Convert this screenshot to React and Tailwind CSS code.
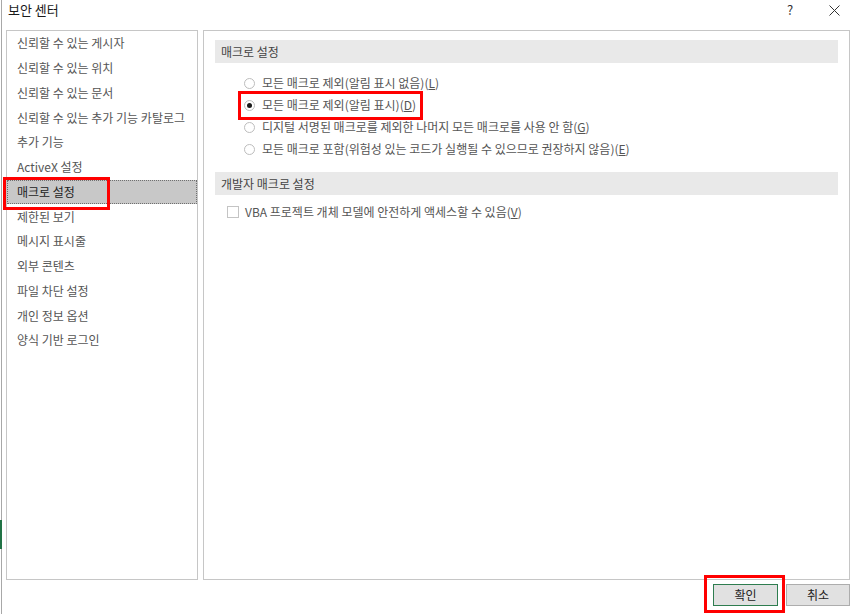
import React from "react";

const items = [
  "신뢰할 수 있는 게시자",
  "신뢰할 수 있는 위치",
  "신뢰할 수 있는 문서",
  "신뢰할 수 있는 추가 기능 카탈로그",
  "추가 기능",
  "ActiveX 설정",
  "매크로 설정",
  "제한된 보기",
  "메시지 표시줄",
  "외부 콘텐츠",
  "파일 차단 설정",
  "개인 정보 옵션",
  "양식 기반 로그인",
];

function Radio({ checked }) {
  return (
    <span className="flex h-[11px] w-[11px] shrink-0 items-center justify-center rounded-full border border-[#bdbdbd] bg-white">
      {checked && <span className="h-[5px] w-[5px] rounded-full bg-[#1a1a1a]" />}
    </span>
  );
}

function Option({ checked, label, k }) {
  return (
    <div className="flex h-[22px] items-center pl-[40px]">
      <Radio checked={checked} />
      <span className="ml-[7px] whitespace-nowrap">
        {label}(<span className="underline">{k}</span>)
      </span>
    </div>
  );
}

export default function App() {
  return (
    <div className="relative flex h-[614px] w-[856px] overflow-hidden bg-white font-['Noto_Sans_CJK_KR',sans-serif] text-[12px] text-[#444]">
      {/* window edge behind dialog */}
      <div className="flex w-[2px] shrink-0 flex-col">
        <div className="ml-px h-[520px] w-px bg-[#a8a8a8]" />
        <div className="h-[29px] w-[2px] bg-[#217346]" />
        <div className="ml-px w-px flex-1 bg-[#a8a8a8]" />
      </div>

      <div className="flex flex-1 flex-col">
        {/* title bar */}
        <div className="flex h-[28px] items-start">
          <div className="pl-[6px] pt-[1px] text-[13px] leading-[18px] text-[#1a1a1a]">보안 센터</div>
          <div className="ml-auto flex">
            <div className="flex h-[20px] w-[44px] items-center justify-center text-[13px] text-[#333]">?</div>
            <div className="flex h-[20px] w-[44px] items-center justify-center text-[#333]">
              <svg width="11" height="11" viewBox="0 0 11 11">
                <path d="M0.5 0.5 L10.5 10.5 M10.5 0.5 L0.5 10.5" stroke="#333" strokeWidth="1" />
              </svg>
            </div>
          </div>
        </div>

        {/* body */}
        <div className="mt-[2px] flex h-[550px] gap-[5px] pl-[4px]">
          {/* left nav */}
          <div className="flex w-[192px] shrink-0 flex-col border border-[#c6c6c6] bg-white">
            {items.map((t, i) =>
              i === 6 ? (
                <div
                  key={t}
                  className="flex h-[24.75px] items-center border border-dotted border-[#6f6f6f] bg-[#c8c8c8] pl-[9px] text-[#222]"
                >
                  {t}
                </div>
              ) : (
                <div key={t} className="flex h-[24.75px] items-center pl-[10px] text-[#555]">
                  {t}
                </div>
              )
            )}
          </div>

          {/* right content */}
          <div className="flex w-[647px] shrink-0 flex-col border border-[#c6c6c6] bg-white pt-[9px]">
            <div className="mx-[11px] flex h-[23px] items-center bg-[#e9e9e9] pl-[6px] text-[#444]">매크로 설정</div>
            <div className="mt-[9px] flex flex-col text-[#555]">
              <Option label="모든 매크로 제외(알림 표시 없음)" k="L" />
              <Option checked label="모든 매크로 제외(알림 표시)" k="D" />
              <Option label="디지털 서명된 매크로를 제외한 나머지 모든 매크로를 사용 안 함" k="G" />
              <Option label="모든 매크로 포함(위험성 있는 코드가 실행될 수 있으므로 권장하지 않음)" k="E" />
            </div>
            <div className="mx-[11px] mt-[12px] flex h-[23px] items-center bg-[#e9e9e9] pl-[6px] text-[#444]">개발자 매크로 설정</div>
            <div className="mt-[6px] flex h-[22px] items-center pl-[23px] text-[#555]">
              <span className="h-[12px] w-[12px] shrink-0 border border-[#c4c4c4] bg-white" />
              <span className="ml-[6px] whitespace-nowrap">
                VBA 프로젝트 개체 모델에 안전하게 액세스할 수 있음(<span className="underline">V</span>)
              </span>
            </div>
          </div>
        </div>

        {/* footer */}
        <div className="flex flex-1 items-start justify-end gap-[8px] pr-[6px] pt-[4px]">
          <button className="flex h-[22px] w-[65px] items-center justify-center border border-[#2e7d4f] bg-[#e1e1e1] text-[#222]">
            확인
          </button>
          <button className="flex h-[22px] w-[64px] items-center justify-center border border-[#adadad] bg-[#e1e1e1] text-[#222]">
            취소
          </button>
        </div>
      </div>

      {/* red annotation boxes */}
      <div className="pointer-events-none absolute left-[3px] top-[177px] h-[33px] w-[107px] border-[3px] border-[#ff0000]" />
      <div className="pointer-events-none absolute left-[238px] top-[91px] h-[29px] w-[185px] border-[3px] border-[#ff0000]" />
      <div className="pointer-events-none absolute left-[704px] top-[575px] h-[38px] w-[81px] border-[3px] border-[#ff0000]" />
    </div>
  );
}
